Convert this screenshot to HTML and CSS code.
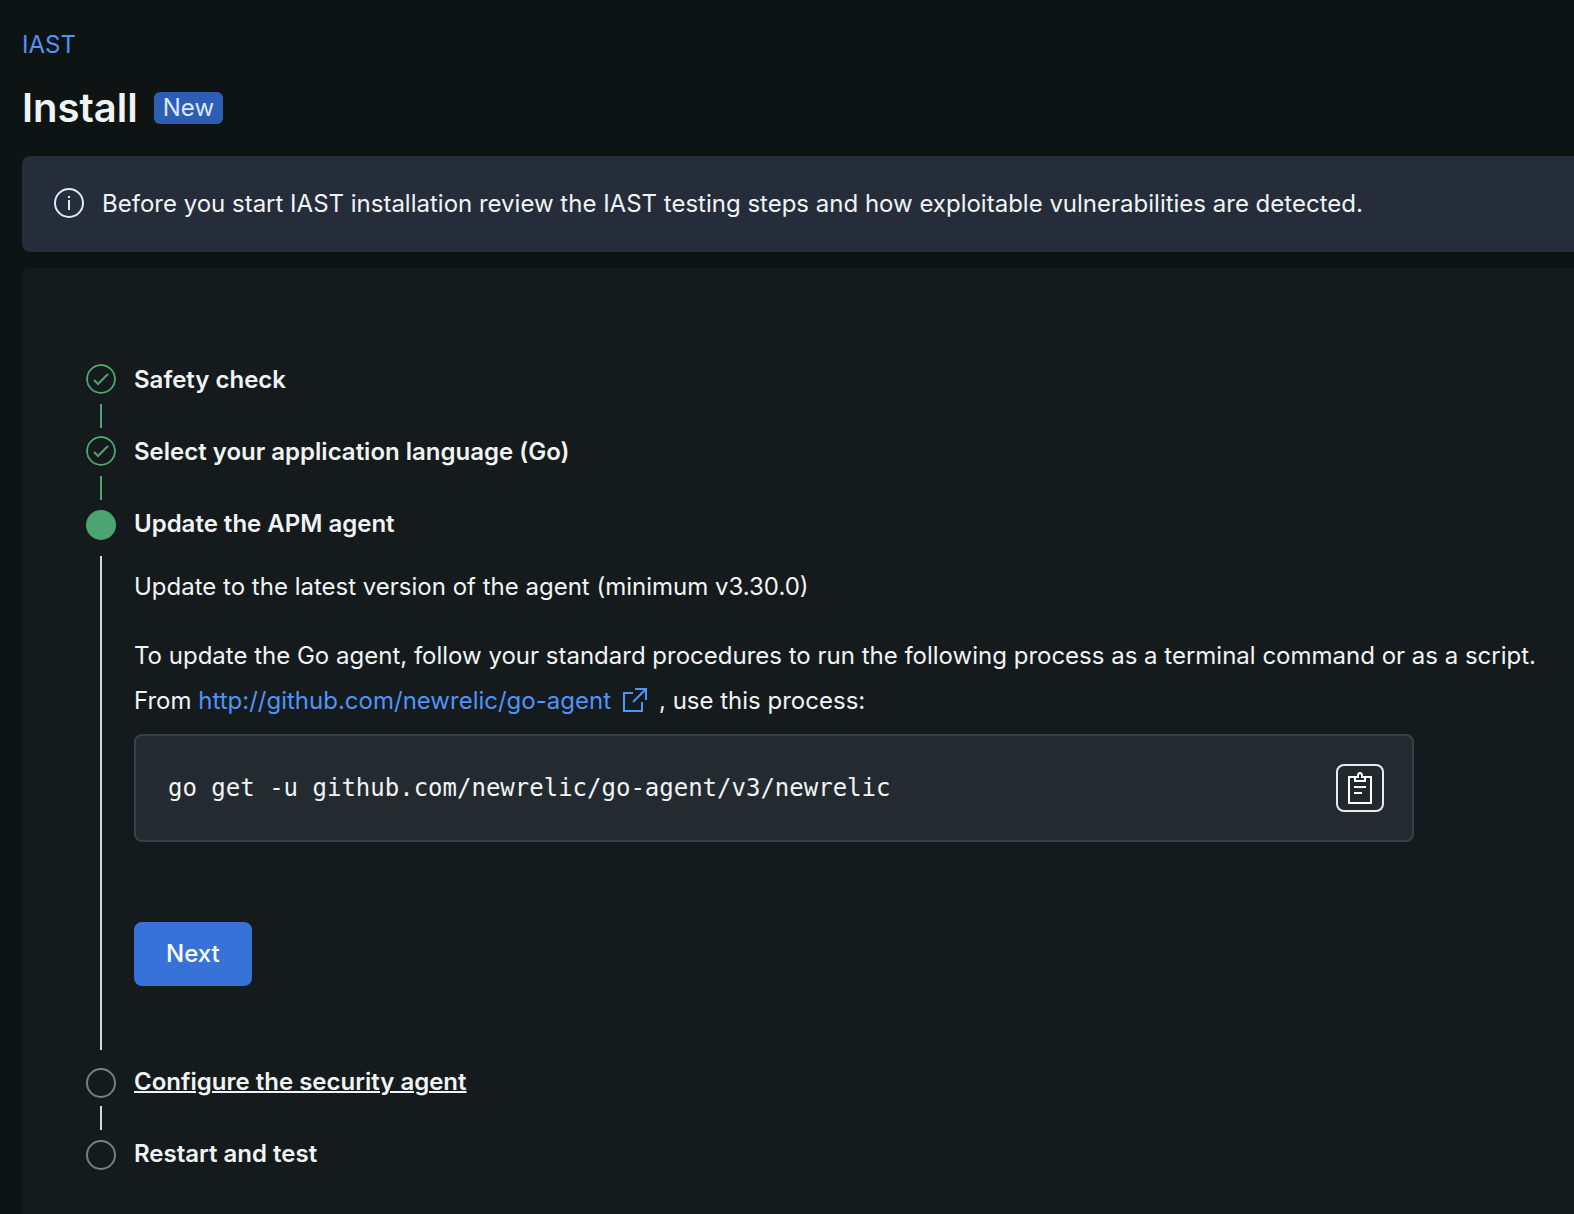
FILE: index.html
```html
<!DOCTYPE html>
<html lang="en">
<head>
<meta charset="utf-8">
<title>Install IAST</title>
<link rel="stylesheet" href="styles.css">
</head>
<body>
<main class="page">
  <nav class="breadcrumb"><a class="link" href="#iast">IAST</a></nav>
  <header class="page-header">
    <h1 class="page-title">Install</h1>
    <span class="badge">New</span>
  </header>

  <div class="banner" role="status">
    <svg class="banner-icon" viewBox="0 0 30 30" aria-hidden="true">
      <circle cx="15" cy="15" r="14"/>
      <path d="M15 8v2M15 12v10"/>
    </svg>
    <p class="banner-text">Before you start IAST installation review the IAST testing steps and how exploitable vulnerabilities are detected.</p>
  </div>

  <section class="panel">
    <ol class="steps">
      <li class="step step-done">
        <div class="track">
          <svg class="marker" viewBox="0 0 30 30" aria-hidden="true"><circle cx="15" cy="15" r="14"/><path d="M8 16l4 4 10-10"/></svg>
          <span class="line"></span>
        </div>
        <h2 class="step-title">Safety check</h2>
      </li>
      <li class="step step-done">
        <div class="track">
          <svg class="marker" viewBox="0 0 30 30" aria-hidden="true"><circle cx="15" cy="15" r="14"/><path d="M8 16l4 4 10-10"/></svg>
          <span class="line"></span>
        </div>
        <h2 class="step-title">Select your application language (Go)</h2>
      </li>
      <li class="step step-active" aria-current="step">
        <div class="track">
          <span class="marker"></span>
          <span class="line"></span>
        </div>
        <div class="step-main">
          <h2 class="step-title">Update the APM agent</h2>
          <p class="step-lead">Update to the latest version of the agent (minimum v3.30.0)</p>
          <p class="step-text">To update the Go agent, follow your standard procedures to run the following process as a terminal command or as a script.</p>
          <p class="step-text"><span>From </span><a class="link" href="http://github.com/newrelic/go-agent">http://github.com/newrelic/go-agent<svg class="external" viewBox="0 0 24 24" aria-hidden="true"><path d="M10 5H1v18h18v-9M12 1h11v11M10 14L23 1"/></svg></a><span>, use this process:</span></p>
          <div class="snippet">
            <code class="code">go get -u github.com/newrelic/go-agent/v3/newrelic</code>
            <button class="copy" type="button" aria-label="Copy to clipboard">
              <svg class="copy-icon" viewBox="0 0 24 32" aria-hidden="true"><path d="M7 5H1v26h22V5h-6M7 4v5h10V4M7 5h3V4a2 3 0 0 1 4 0v1h3M6 15h12M6 21h8"/></svg>
            </button>
          </div>
          <button class="next" type="button">Next</button>
        </div>
      </li>
      <li class="step step-pending">
        <div class="track">
          <span class="marker"></span>
          <span class="line"></span>
        </div>
        <h2 class="step-title"><a class="step-link" href="#configure">Configure the security agent</a></h2>
      </li>
      <li class="step step-pending">
        <div class="track">
          <span class="marker"></span>
        </div>
        <h2 class="step-title">Restart and test</h2>
      </li>
    </ol>
  </section>
</main>
</body>
</html>
```
FILE: styles.css
```css
* {
  box-sizing: border-box;
}

body {
  margin: 0;
  background: #0e1313;
  color: #f1f4f4;
  font: 400 24px/32px Inter, "Liberation Sans", sans-serif;
}

h1, h2, p, ol {
  margin: 0;
  padding: 0;
}

svg {
  fill: none;
  stroke: currentColor;
  stroke-width: 2;
}

.page {
  display: flex;
  flex-direction: column;
  min-height: 100vh;
  padding: 29px 0 0 22px;
}

.link {
  color: #5094f5;
  text-decoration: none;
}

.page-header {
  display: flex;
  align-items: center;
  gap: 16px;
  margin: 23px 0 24px;
}

.page-title {
  font-size: 40px;
  font-weight: 600;
  line-height: 48px;
}

.badge {
  padding: 0 9px;
  border-radius: 6px;
  background: #2d5eb3;
  color: #dbe8fd;
}

.banner {
  display: flex;
  align-items: flex-start;
  gap: 18px;
  padding: 32px;
  border-radius: 8px 0 0 8px;
  background: #252d3b;
}

.banner-icon {
  flex: none;
  width: 30px;
  height: 30px;
  color: #dbe8fd;
}

.panel {
  flex: 1;
  margin-top: 16px;
  padding: 96px 32px 44px 64px;
  border-radius: 8px 0 0 0;
  background: #151a1c;
}

.steps {
  list-style: none;
}

.step {
  display: grid;
  grid-template-columns: 30px 1fr;
  gap: 18px;
}

.track {
  display: flex;
  flex-direction: column;
  align-items: center;
}

.marker {
  flex: none;
  width: 30px;
  height: 30px;
  border-radius: 50%;
}

.line {
  flex: 1;
  width: 2px;
  min-height: 24px;
  margin: 10px 0 8px;
  background: #d5d8d9;
}

.step-done .marker {
  color: #4ca471;
}

.step-done .line {
  background: #4ca471;
}

.step-active .marker {
  margin-top: 2px;
  background: #4ca471;
}

.step-active .line {
  margin: 16px 0;
}

.step-pending .marker {
  margin-top: 2px;
  border: 2px solid #797e82;
}

.step-pending .line {
  margin: 8px 0;
}

.step-title {
  font-size: 24px;
  font-weight: 600;
}

.step-link {
  color: inherit;
  text-decoration-thickness: 2px;
}

.step-main {
  padding-bottom: 80px;
}

.step-lead {
  margin: 31px 0 30px;
}

.step-text {
  line-height: 45px;
}

.external {
  width: 24px;
  height: 24px;
  margin: 0 12px;
  vertical-align: -3px;
}

.snippet {
  display: flex;
  align-items: center;
  justify-content: space-between;
  max-width: 1280px;
  margin: 11px 0 80px;
  padding: 28px 28px 28px 32px;
  border: 2px solid #3b4246;
  border-radius: 8px;
  background: #242b30;
}

.code {
  font: 24px/32px "DejaVu Sans Mono", monospace;
}

.copy {
  display: grid;
  place-items: center;
  width: 48px;
  height: 48px;
  padding: 0;
  border: 2px solid #e8eaea;
  border-radius: 8px;
  background: #22292c;
  color: #fff;
}

.copy-icon {
  width: 24px;
  height: 32px;
}

.next {
  display: block;
  padding: 16px 32px;
  border: 0;
  border-radius: 8px;
  background: #3672d8;
  color: #fff;
  font: inherit;
  font-weight: 500;
}
```
